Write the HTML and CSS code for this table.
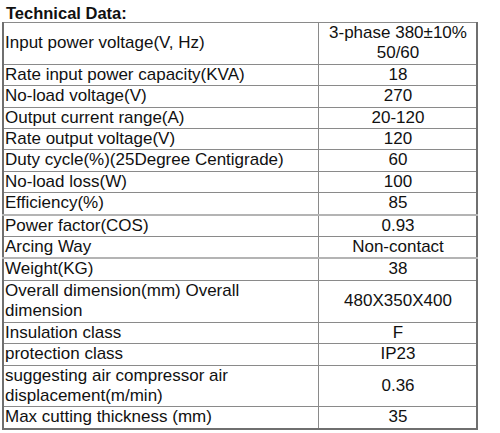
FILE: index.html
```html
<!DOCTYPE html>
<html lang="en">
  <head>
    <meta charset="UTF-8" />
    <meta name="viewport" content="width=device-width, initial-scale=1.0" />
    <title>Technical Data</title>
    <link rel="stylesheet" href="styles.css">
  </head>
  <body>
    <div class="spec-title">Technical Data:</div>
    <table class="spec-table">
      <tr>
        <td class="spec-name">Input power voltage(V, Hz)</td>
        <td class="spec-value">3-phase 380±10%<br />50/60</td>
      </tr>
      <tr>
        <td class="spec-name">Rate input power capacity(KVA)</td>
        <td class="spec-value">18</td>
      </tr>
      <tr>
        <td class="spec-name">No-load voltage(V)</td>
        <td class="spec-value">270</td>
      </tr>
      <tr>
        <td class="spec-name">Output current range(A)</td>
        <td class="spec-value">20-120</td>
      </tr>
      <tr>
        <td class="spec-name">Rate output voltage(V)</td>
        <td class="spec-value">120</td>
      </tr>
      <tr>
        <td class="spec-name">Duty cycle(%)(25Degree Centigrade)</td>
        <td class="spec-value">60</td>
      </tr>
      <tr>
        <td class="spec-name">No-load loss(W)</td>
        <td class="spec-value">100</td>
      </tr>
      <tr class="soft-line">
        <td class="spec-name">Efficiency(%)</td>
        <td class="spec-value">85</td>
      </tr>
      <tr>
        <td class="spec-name">Power factor(COS)</td>
        <td class="spec-value">0.93</td>
      </tr>
      <tr class="soft-line">
        <td class="spec-name">Arcing Way</td>
        <td class="spec-value">Non-contact</td>
      </tr>
      <tr>
        <td class="spec-name">Weight(KG)</td>
        <td class="spec-value">38</td>
      </tr>
      <tr>
        <td class="spec-name">Overall dimension(mm) Overall<br />dimension</td>
        <td class="spec-value">480X350X400</td>
      </tr>
      <tr>
        <td class="spec-name">Insulation class</td>
        <td class="spec-value">F</td>
      </tr>
      <tr>
        <td class="spec-name">protection class</td>
        <td class="spec-value">IP23</td>
      </tr>
      <tr>
        <td class="spec-name">suggesting air compressor air<br />displacement(m/min)</td>
        <td class="spec-value">0.36</td>
      </tr>
      <tr>
        <td class="spec-name">Max cutting thickness (mm)</td>
        <td class="spec-value">35</td>
      </tr>
    </table>
  </body>
</html>
```

FILE: styles.css
```css
body {
  margin: 0;
  background-color: white;
  font-family: "Liberation Sans", Arial, sans-serif;
  color: #111;
}

.spec-title {
  padding: 4px 0 0 6px;
  height: 18px;
  font-size: 16.5px;
  font-weight: bold;
  line-height: 18px;
}

.spec-table {
  margin-left: 2px;
  width: 476px;
  border-collapse: collapse;
  border: 2px solid #6f6f6f;
  border-top-width: 1px;
  font-size: 17px;
  line-height: 20.4px;
}

.spec-table td {
  padding: 0 0 0 1px;
  border: 1px solid #8a8a8a;
  vertical-align: middle;
}

.spec-name {
  width: 313px;
  text-align: left;
}

.spec-value {
  text-align: center;
}

/* lighter, thicker rule under a few rows */
.soft-line td {
  border-bottom: 2px solid #b4b4b4;
}
```
